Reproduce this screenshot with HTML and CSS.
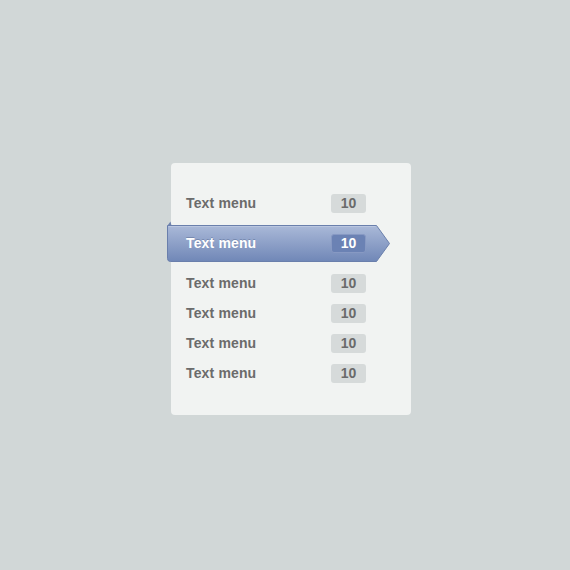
FILE: index.html
```html
<!DOCTYPE html>
<html lang="en">
  <head>
    <meta charset="UTF-8" />
    <title>Side menu with counters</title>
    <link rel="stylesheet" href="styles.css">
  </head>
  <body>
    <!-- 메뉴 박스 -->
    <nav class="panel">
      <ul class="menu">
        <li class="item">
          <a href="#">Text menu</a>
          <span class="count">10</span>
        </li>
        <li class="item active">
          <!-- 리본 배경 -->
          <svg class="ribbon" width="224" height="42" viewBox="0 0 224 42">
            <defs>
              <linearGradient id="rb" x1="0" y1="0" x2="0" y2="1">
                <stop offset="0" stop-color="#aab9d8" />
                <stop offset="1" stop-color="#7087b7" />
              </linearGradient>
            </defs>
            <path d="M0.5 4.5 L3.5 0.5 L4.5 4.5 Z" fill="#7184ad" />
            <path d="M0.5 4.5 L209.5 4.5 L222.5 22.5 L209.5 40.5 L3.5 40.5 Q0.5 40.5 0.5 37.5 Z" fill="url(#rb)" stroke="#6a7fac" />
            <path d="M1.5 5.5 L208.5 5.5" stroke="#bac6e0" />
          </svg>
          <a href="#">Text menu</a>
          <span class="count">10</span>
        </li>
        <li class="item">
          <a href="#">Text menu</a>
          <span class="count">10</span>
        </li>
        <li class="item">
          <a href="#">Text menu</a>
          <span class="count">10</span>
        </li>
        <li class="item">
          <a href="#">Text menu</a>
          <span class="count">10</span>
        </li>
        <li class="item">
          <a href="#">Text menu</a>
          <span class="count">10</span>
        </li>
      </ul>
    </nav>
  </body>
</html>
```

FILE: styles.css
```css
/* 초기화 */
html,
body,
ul {
  margin: 0;
  padding: 0;
}
ul {
  list-style: none;
}

body {
  background-color: #d1d7d7;
  font-family: "Liberation Sans", Arial, sans-serif;
}

/* 메뉴 패널 */
.panel {
  width: 240px;
  margin: 163px 0 0 171px;
  padding: 25px 0 27px;
  background-color: #f1f3f2;
  border-radius: 4px;
  box-sizing: border-box;
}

/* 메뉴 한 줄 */
.item {
  position: relative;
  display: flex;
  align-items: center;
  justify-content: space-between;
  height: 30px;
  padding: 0 45px 0 15px;
}
.item a {
  position: relative;
  color: #6b6b6b;
  font-size: 14px;
  font-weight: bold;
  letter-spacing: 0.15px;
  text-decoration: none;
}

/* 숫자 뱃지 */
.count {
  position: relative;
  width: 35px;
  height: 19px;
  border-radius: 3px;
  background-color: #d6dada;
  color: #6a6a6a;
  font-size: 14px;
  font-weight: bold;
  line-height: 19px;
  text-align: center;
}

/* 선택된 메뉴 */
.active {
  height: 50px;
}
.ribbon {
  position: absolute;
  top: 3px;
  left: -4px;
}
.active a {
  color: #fff;
  text-shadow: 0 -1px 0 rgba(60, 80, 120, 0.35);
}
.active .count {
  box-sizing: border-box;
  border: 1px solid #8799c3;
  background-color: #6b82b4;
  color: #fff;
  line-height: 17px;
}
```
